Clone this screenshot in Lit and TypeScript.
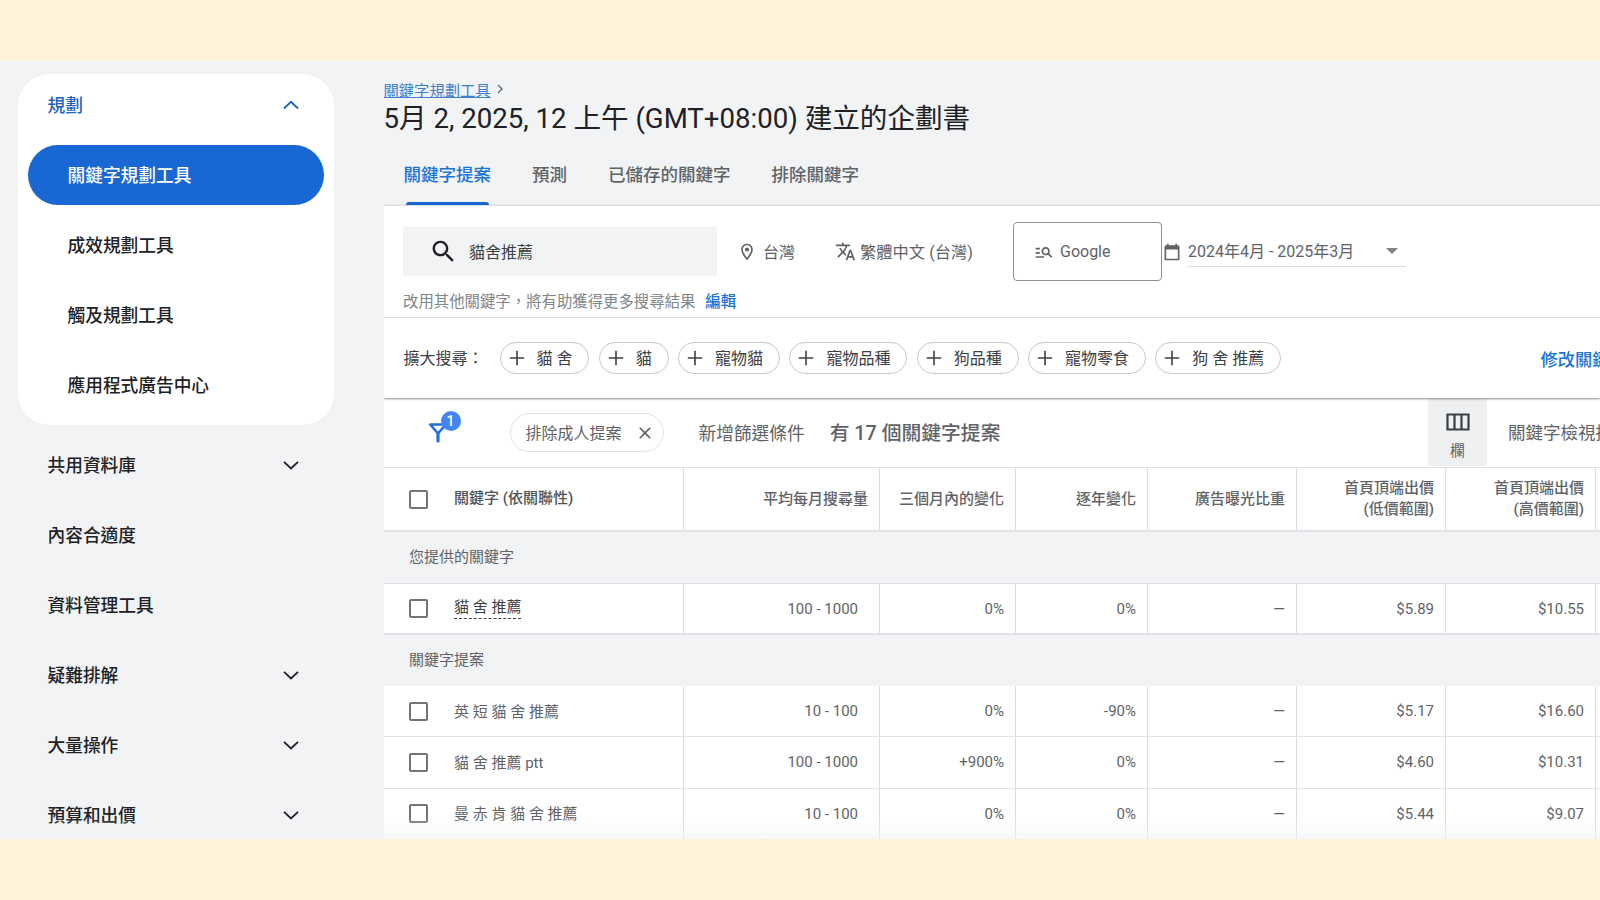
import { LitElement, html, css, svg } from "lit";
import { customElement } from "lit/decorators.js";

const sideTop = ["關鍵字規劃工具", "成效規劃工具", "觸及規劃工具", "應用程式廣告中心"];
const sideRest = [
  { label: "共用資料庫", more: true },
  { label: "內容合適度", more: false },
  { label: "資料管理工具", more: false },
  { label: "疑難排解", more: true },
  { label: "大量操作", more: true },
  { label: "預算和出價", more: true },
];
const tabs = ["關鍵字提案", "預測", "已儲存的關鍵字", "排除關鍵字"];
const chips = ["貓 舍", "貓", "寵物貓", "寵物品種", "狗品種", "寵物零食", "狗 舍 推薦"];
const ideas = [
  ["英 短 貓 舍 推薦", "10 - 100", "0%", "-90%", "—", "$5.17", "$16.60"],
  ["貓 舍 推薦 ptt", "100 - 1000", "+900%", "0%", "—", "$4.60", "$10.31"],
  ["曼 赤 肯 貓 舍 推薦", "10 - 100", "0%", "0%", "—", "$5.44", "$9.07"],
];

const icon = (d: unknown, size: number, cls = "") =>
  html`<svg class=${cls} width=${size} height=${size} viewBox="0 0 24 24" fill="currentColor">${d}</svg>`;

const chevron = (up: boolean) => html`<svg class="chev" width="18" height="18" viewBox="0 0 18 18" fill="none" stroke="currentColor" stroke-width="1.8">
  <path d=${up ? "M2 12.5 9 5.8l7 6.7" : "M2 5.8l7 6.7 7-6.7"}></path>
</svg>`;

const plus = html`<svg class="plus" width="16" height="16" viewBox="0 0 16 16" fill="none" stroke="currentColor" stroke-width="1.6">
  <path d="M8 .8v14.4M.8 8h14.4"></path>
</svg>`;

const searchPath = svg`<path d="M15.5 14h-.79l-.28-.27C15.41 12.59 16 11.11 16 9.5 16 5.91 13.09 3 9.5 3S3 5.91 3 9.5 5.91 16 9.5 16c1.61 0 3.09-.59 4.23-1.57l.27.28v.79l5 4.99L20.49 19l-4.99-5zm-6 0C7.01 14 5 11.99 5 9.5S7.01 5 9.5 5 14 7.01 14 9.5 11.99 14 9.5 14z"/>`;
const pinPath = svg`<path d="M12 2C8.13 2 5 5.13 5 9c0 5.25 7 13 7 13s7-7.75 7-13c0-3.87-3.13-7-7-7zM7 9c0-2.76 2.24-5 5-5s5 2.24 5 5c0 2.88-2.88 7.19-5 9.88C9.92 16.21 7 11.85 7 9z"/><circle cx="12" cy="9" r="2.5"/>`;
const translatePath = svg`<path d="M12.87 15.07l-2.54-2.51.03-.03c1.74-1.94 2.98-4.17 3.71-6.53H17V4h-7V2H8v2H1v1.99h11.17C11.5 7.92 10.44 9.75 9 11.35 8.07 10.32 7.3 9.19 6.69 8h-2c.73 1.63 1.73 3.17 2.98 4.56l-5.09 5.02L4 19l5-5 3.11 3.11.76-2.04zM18.5 10h-2L12 22h2l1.12-3h4.75L21 22h2l-4.5-12zm-2.62 7l1.62-4.33L19.12 17h-3.24z"/>`;
const networkPath = svg`<path d="M7 9H2V7h5v2zm0 3H2v2h5v-2zm13.59 7l-3.83-3.83c-.8.52-1.74.83-2.76.83-2.76 0-5-2.24-5-5s2.24-5 5-5 5 2.24 5 5c0 1.02-.31 1.96-.83 2.75L22 17.59 20.59 19zM17 11c0-1.65-1.35-3-3-3s-3 1.35-3 3 1.35 3 3 3 3-1.35 3-3zM2 19h10v-2H2v2z"/>`;
const calendarPath = svg`<path d="M19 4h-1V2h-2v2H8V2H6v2H5c-1.1 0-2 .9-2 2v14c0 1.1.9 2 2 2h14c1.1 0 2-.9 2-2V6c0-1.1-.9-2-2-2zm0 16H5V9h14v11z"/>`;
const closePath = svg`<path d="M19 6.41L17.59 5 12 10.59 6.41 5 5 6.41 10.59 12 5 17.59 6.41 19 12 13.41 17.59 19 19 17.59 13.41 12 19 6.41z"/>`;

@customElement("app-root")
export class AppRoot extends LitElement {
  static styles = css`
    :host {
      display: block;
      width: 1600px;
      height: 900px;
      overflow: hidden;
      background: #fef2d9;
      font-family: Roboto, "Noto Sans CJK TC", sans-serif;
      color: #3c4043;
    }

    svg {
      display: block;
      flex: none;
    }

    .band {
      height: 61px;
    }

    .screen {
      position: relative;
      height: 778px;
      display: flex;
      background: #f1f3f5;
      overflow: hidden;
    }

    .screen::after {
      content: "";
      position: absolute;
      left: 0;
      right: 0;
      bottom: 0;
      height: 22px;
      background: linear-gradient(rgba(241, 243, 245, 0), rgba(241, 243, 245, 0.55));
      pointer-events: none;
    }

    /* sidebar */
    .side {
      width: 383.5px;
      flex: none;
      padding: 13px 0 0 17.5px;
      box-sizing: border-box;
      font-size: 17.7px;
      font-weight: 500;
      color: #202124;
    }

    .card {
      width: 316px;
      height: 351px;
      box-sizing: border-box;
      background: #fff;
      border-radius: 32px;
      margin-bottom: 5px;
    }

    .side-head,
    .side-row {
      display: flex;
      align-items: center;
      justify-content: space-between;
      width: 316px;
      box-sizing: border-box;
      padding: 0 34px 0 30px;
    }

    .side-head {
      height: 62px;
      margin-bottom: 9px;
      color: #1a62c4;
    }

    .side-row {
      height: 70px;
    }

    .side-head span,
    .side-row span,
    .side-item span {
      padding-bottom: 3px;
    }

    .side-item {
      display: flex;
      align-items: center;
      height: 60px;
      margin: 0 10px 10px;
      padding-left: 40px;
      border-radius: 30px;
    }

    .side-item.active {
      background: #1967d2;
      color: #fff;
    }

    /* main column */
    .main {
      flex: 1;
      min-width: 0;
      overflow: hidden;
    }

    .crumb {
      display: flex;
      align-items: center;
      gap: 4px;
      height: 20px;
      margin-top: 18px;
      font-size: 15.3px;
      color: #3f7fd0;
    }

    .crumb a {
      text-decoration: underline;
    }

    .crumb svg {
      color: #5f6368;
    }

    h1 {
      margin: 3px 0 0;
      height: 32px;
      line-height: 34px;
      font-size: 27.6px;
      font-weight: 400;
      color: #202124;
      white-space: nowrap;
    }

    .tabs {
      display: flex;
      gap: 41px;
      height: 71px;
      padding-left: 20px;
      box-sizing: border-box;
      font-size: 17.5px;
      color: #5f6368;
      font-weight: 500;
    }

    .tab {
      position: relative;
      padding-top: 30px;
      line-height: 22px;
    }

    .tab.on {
      color: #1a73d8;
    }

    .tab.on::after {
      content: "";
      position: absolute;
      left: 2px;
      right: 2px;
      bottom: 0;
      height: 3px;
      border-radius: 3px 3px 0 0;
      background: #1967d2;
    }

    .panel {
      position: relative;
      z-index: 1;
      background: #fff;
      border-top: 1px solid #dadce0;
      box-shadow: 0 1px 2px rgba(60, 64, 67, 0.6);
    }

    .query {
      display: flex;
      align-items: center;
      height: 59px;
      margin-top: 16px;
      padding-left: 19.5px;
      font-size: 16px;
      color: #5f6368;
      white-space: nowrap;
    }

    .searchbox span,
    .loc span,
    .lang span,
    .date-field span,
    .expand-label,
    .chip span,
    .applied span,
    .add-filter,
    .count,
    .view,
    .td.kw span:last-child {
      padding-bottom: 2px;
    }

    .searchbox {
      display: flex;
      align-items: center;
      width: 314px;
      height: 49px;
      box-sizing: border-box;
      padding-left: 26px;
      gap: 11px;
      background: #f1f3f4;
      color: #3c4043;
    }

    .searchbox svg {
      color: #202124;
    }

    .loc {
      display: flex;
      align-items: center;
      gap: 6px;
      margin-left: 20px;
    }

    .lang {
      display: flex;
      align-items: center;
      gap: 4px;
      margin-left: 40px;
      font-size: 16.3px;
    }

    .net {
      display: flex;
      align-items: center;
      gap: 6px;
      width: 149px;
      height: 59px;
      box-sizing: border-box;
      margin-left: 40px;
      padding-left: 20px;
      border: 1.5px solid #8c9196;
      border-radius: 4px;
    }

    .date {
      display: flex;
      align-items: center;
      margin-left: 0;
    }

    .date-field {
      position: relative;
      display: flex;
      align-items: center;
      width: 218px;
      height: 30px;
      margin-left: 6px;
      border-bottom: 1px solid #dadce0;
    }

    .caret {
      position: absolute;
      left: 198px;
      top: 12px;
      width: 0;
      height: 0;
      border: 6px solid transparent;
      border-top: 6px solid #80868b;
      border-bottom: 0;
    }

    .hint {
      height: 20px;
      line-height: 20px;
      margin-top: 11px;
      padding: 0 0 5px 19.5px;
      font-size: 15.4px;
      color: #80868b;
      white-space: nowrap;
    }

    .hint a {
      margin-left: 6px;
      color: #1a73d8;
      font-weight: 500;
    }

    .expand {
      display: flex;
      align-items: center;
      height: 81px;
      padding-left: 20px;
      border-top: 1px solid #dadce0;
      box-sizing: border-box;
      font-size: 16px;
      white-space: nowrap;
    }

    .expand-label {
      width: 96px;
      flex: none;
      color: #3c4043;
    }

    .chip {
      display: flex;
      flex: none;
      align-items: center;
      gap: 12px;
      height: 32px;
      box-sizing: border-box;
      padding: 0 16px 0 8px;
      margin-right: 9.3px;
      border: 1px solid #c6c9cc;
      border-radius: 16px;
      color: #3c4043;
    }

    .edit-link {
      flex: none;
      margin-left: 250px;
      font-size: 17.2px;
      font-weight: 500;
      color: #1a73d8;
    }

    .filters {
      display: flex;
      align-items: center;
      height: 69px;
      background: #fff;
      white-space: nowrap;
      color: #5f6368;
    }

    .funnel {
      position: relative;
      width: 126px;
      height: 69px;
      flex: none;
    }

    .funnel svg {
      position: absolute;
      left: 44px;
      top: 23px;
    }

    .badge {
      position: absolute;
      left: 57px;
      top: 13px;
      width: 20px;
      height: 20px;
      border-radius: 50%;
      background: #4285f4;
      color: #fff;
      font-size: 14px;
      font-weight: 500;
      line-height: 20px;
      text-align: center;
    }

    .applied {
      display: flex;
      align-items: center;
      gap: 13px;
      height: 39px;
      width: 154px;
      box-sizing: border-box;
      padding-left: 15px;
      border: 1px solid #e0e2e5;
      border-radius: 20px;
      font-size: 16px;
      flex: none;
    }

    .add-filter {
      margin-left: 35px;
      font-size: 17.7px;
    }

    .count {
      margin-left: 25px;
      font-size: 19.8px;
      font-weight: 500;
    }

    .columns {
      width: 59px;
      height: 67px;
      margin: 0 0 0 auto;
      flex: none;
      display: flex;
      flex-direction: column;
      align-items: center;
      padding-top: 14px;
      box-sizing: border-box;
      gap: 8px;
      background: #eef0f1;
      border-radius: 0 0 4px 4px;
      font-size: 15px;
      color: #5f6368;
    }

    .view {
      width: 92px;
      margin-left: 21px;
      flex: none;
      overflow: hidden;
      font-size: 17.5px;
    }

    /* table */
    .tr {
      display: grid;
      grid-template-columns: 300.5px 196px 136px 132px 149px 149px 150px 4px;
      background: #fff;
      border-bottom: 1px solid #dfe1e5;
      box-sizing: border-box;
      height: 51.3px;
      font-size: 15px;
      color: #5f6368;
    }

    .tr.head {
      height: 65px;
      border-top: 1px solid #dfe1e5;
      border-bottom: 2px solid #dfe1e5;
      font-weight: 500;
      line-height: 21px;
    }

    .tr.first {
      border-top: 1px solid #dfe1e5;
      height: 52px;
      border-bottom-width: 2px;
    }

    .td {
      display: flex;
      align-items: center;
      justify-content: flex-end;
      text-align: right;
      padding-right: 11px;
      border-right: 1px solid #dadce0;
      white-space: nowrap;
    }

    .td.kw {
      justify-content: flex-start;
      text-align: left;
      gap: 26px;
      padding: 0 0 0 25.5px;
    }

    .head .td.kw {
      color: #4f5357;
    }

    .first .td.kw {
      color: #3c4043;
    }

    .td.vol {
      padding-right: 21px;
    }

    .head .td.vol {
      padding-right: 11px;
    }

    .td.end {
      border-right: 0;
    }

    .box {
      width: 15px;
      height: 15px;
      flex: none;
      border: 2px solid #757575;
      border-radius: 2px;
    }

    .td.kw .dotted {
      color: #3c4043;
      border-bottom: 1.5px dashed #3c4043;
      line-height: 18px;
      padding-bottom: 0;
    }

    .group {
      height: 51px;
      line-height: 51px;
      padding-left: 25.5px;
      font-size: 15px;
      color: #5f6368;
    }
  `;

  private renderRow(row: string[], first = false) {
    const [keyword, volume, three, year, share, low, high] = row;
    return html`<div class="tr ${first ? "first" : ""}">
      <div class="td kw">
        <span class="box"></span>
        <span class=${first ? "dotted" : ""}>${keyword}</span>
      </div>
      <div class="td vol">${volume}</div>
      <div class="td">${three}</div>
      <div class="td">${year}</div>
      <div class="td">${share}</div>
      <div class="td">${low}</div>
      <div class="td">${high}</div>
      <div class="td end"></div>
    </div>`;
  }

  render() {
    return html`
      <div class="band"></div>
      <div class="screen">
        <aside class="side">
          <div class="card">
            <div class="side-head"><span>規劃</span>${chevron(true)}</div>
            ${sideTop.map(
              (label, i) => html`<div class="side-item ${i === 0 ? "active" : ""}"><span>${label}</span></div>`
            )}
          </div>
          ${sideRest.map(
            (item) => html`<div class="side-row"><span>${item.label}</span>${item.more ? chevron(false) : ""}</div>`
          )}
        </aside>

        <section class="main">
          <div class="crumb">
            <a>關鍵字規劃工具</a>
            <svg width="10" height="12" viewBox="0 0 10 12" fill="none" stroke="currentColor" stroke-width="1.2"><path d="M3 2l4 4-4 4"></path></svg>
          </div>
          <h1>5月 2, 2025, 12 上午 (GMT+08:00) 建立的企劃書</h1>
          <nav class="tabs">
            ${tabs.map((t, i) => html`<div class="tab ${i === 0 ? "on" : ""}">${t}</div>`)}
          </nav>

          <div class="panel">
            <div class="query">
              <div class="searchbox">${icon(searchPath, 29)}<span>貓舍推薦</span></div>
              <div class="loc">${icon(pinPath, 20)}<span>台灣</span></div>
              <div class="lang">${icon(translatePath, 21)}<span>繁體中文 (台灣)</span></div>
              <div class="net">${icon(networkPath, 20)}<span>Google</span></div>
              <div class="date">
                ${icon(calendarPath, 20)}
                <div class="date-field"><span>2024年4月 - 2025年3月</span><i class="caret"></i></div>
              </div>
            </div>
            <div class="hint">改用其他關鍵字，將有助獲得更多搜尋結果 <a>編輯</a></div>
            <div class="expand">
              <span class="expand-label">擴大搜尋：</span>
              ${chips.map((c) => html`<div class="chip">${plus}<span>${c}</span></div>`)}
              <span class="edit-link">修改關鍵字提案</span>
            </div>
          </div>

          <div class="filters">
            <div class="funnel">
              <svg width="20" height="22" viewBox="0 0 20 22" fill="none" stroke="#1a73d8" stroke-linejoin="round" stroke-linecap="round">
                <path d="M2.2 3.5h15.6L10 12.5z" stroke-width="2.6"></path>
                <path d="M10 12.5V20" stroke-width="3.2"></path>
              </svg>
              <span class="badge">1</span>
            </div>
            <div class="applied"><span>排除成人提案</span>${icon(closePath, 20)}</div>
            <span class="add-filter">新增篩選條件</span>
            <span class="count">有 17 個關鍵字提案</span>
            <div class="columns">
              <svg width="24" height="18" viewBox="0 0 24 18" fill="none" stroke="#3c4043" stroke-width="2.2">
                <path d="M1.5 1.5h21v15h-21zM8.5 1.5v15M15.5 1.5v15"></path>
              </svg>
              <span>欄</span>
            </div>
            <div class="view">關鍵字檢視排序</div>
          </div>

          <div class="tr head">
            <div class="td kw"><span class="box"></span><span>關鍵字 (依關聯性)</span></div>
            <div class="td vol">平均每月搜尋量</div>
            <div class="td">三個月內的變化</div>
            <div class="td">逐年變化</div>
            <div class="td">廣告曝光比重</div>
            <div class="td">首頁頂端出價<br />(低價範圍)</div>
            <div class="td">首頁頂端出價<br />(高價範圍)</div>
            <div class="td end"></div>
          </div>
          <div class="group">您提供的關鍵字</div>
          ${this.renderRow(["貓 舍 推薦", "100 - 1000", "0%", "0%", "—", "$5.89", "$10.55"], true)}
          <div class="group">關鍵字提案</div>
          ${ideas.map((r) => this.renderRow(r))}
        </section>
      </div>
      <div class="band"></div>
    `;
  }
}
